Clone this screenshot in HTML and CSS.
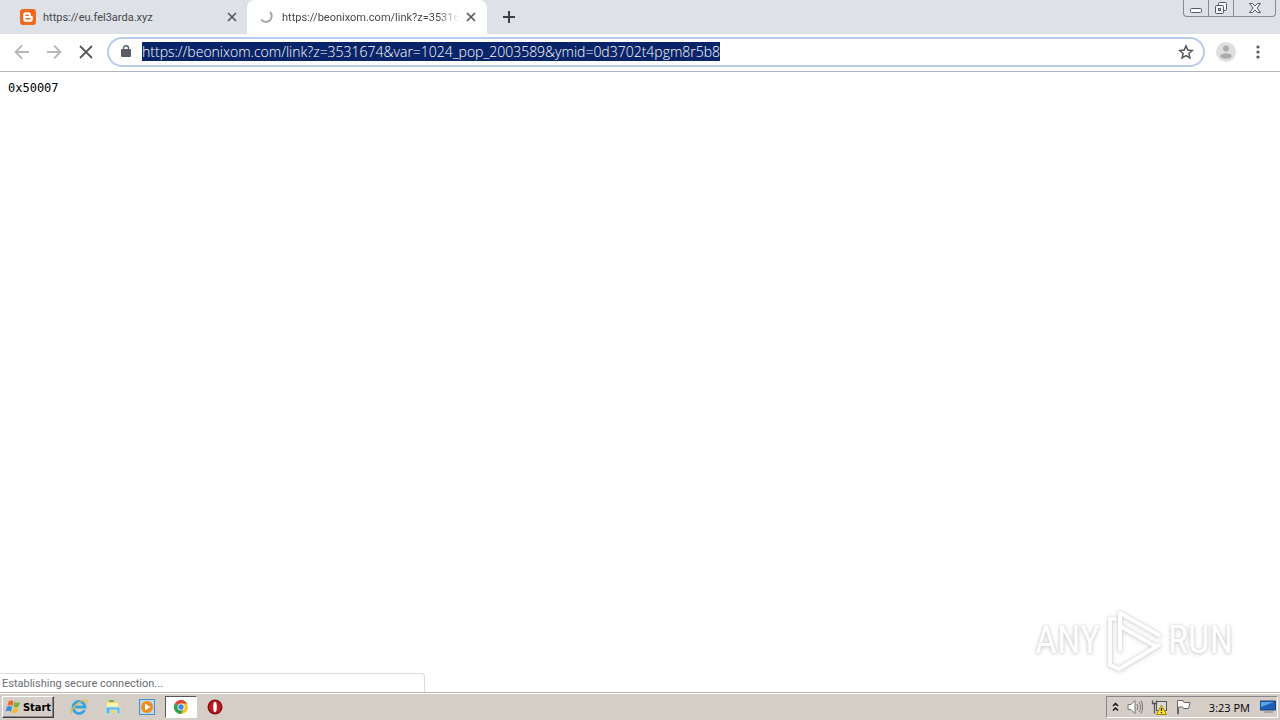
FILE: index.html
```html
<!DOCTYPE html>
<html lang="en">
<head>
<meta charset="utf-8">
<title>Browser desktop</title>
<link rel="stylesheet" href="styles.css">
</head>
<body>
<header class="tabstrip">
  <nav class="tabs">
    <div class="tab">
      <svg class="icon16" viewBox="0 0 16 16"><rect width="16" height="16" rx="3" fill="#f06a1d"/><path d="M6 3.200h2.300a2.600 2.600 0 0 1 2.600 2.600c0 1 .2 1.200 1 1.200.6 0 .9.300.9.900v2a2.800 2.800 0 0 1-2.800 2.800H6a2.800 2.800 0 0 1-2.800-2.800V6A2.800 2.800 0 0 1 6 3.200z" fill="#fff"/><path d="M6 6.200h2.200M6 9.800h4" stroke="#f06a1d" stroke-width="1.400" stroke-linecap="round"/></svg>
      <a class="tab-title" href="#">https://eu.fel3arda.xyz</a>
      <button class="tab-close" aria-label="Close tab"><svg viewBox="0 0 10 10"><path d="M1 1l8 8M9 1L1 9" stroke="#55585c" stroke-width="1.700"/></svg></button>
    </div>
    <div class="tab tab-active">
      <svg class="icon16" viewBox="0 0 16 16"><path d="M11 3a5.800 5.800 0 1 1-8.800 7.500" fill="none" stroke="#a2a4a7" stroke-width="1.900"/></svg>
      <a class="tab-title tab-fade" href="#">https://beonixom.com/link?z=35316</a>
      <button class="tab-close" aria-label="Close tab"><svg viewBox="0 0 10 10"><path d="M1 1l8 8M9 1L1 9" stroke="#55585c" stroke-width="1.700"/></svg></button>
    </div>
    <button class="new-tab" aria-label="New tab"><svg viewBox="0 0 12 12"><path d="M6 0v12M0 6h12" stroke="#3c4043" stroke-width="2"/></svg></button>
  </nav>
  <div class="window-controls">
    <button aria-label="Minimize"><svg width="14" height="16" viewBox="0 0 14 16"><rect x="1.500" y="8.500" width="11" height="4" rx="1" fill="#fff" stroke="#535666"/></svg></button>
    <button aria-label="Restore"><svg width="14" height="16" viewBox="0 0 14 16"><g fill="#f4f5f7" stroke="#535666"><rect x="4.500" y="2.500" width="8" height="8" rx="1"/><rect x="1.500" y="5.500" width="8" height="8" rx="1"/><rect x="4.500" y="8.500" width="2" height="2"/></g></svg></button>
    <button class="wide" aria-label="Close window"><svg width="14" height="16" viewBox="0 0 14 16"><path d="M1.500 3.500h3L7 6l2.500-2.500h3L9 8l3.500 4.500h-3L7 10l-2.500 2.500h-3L5 8z" fill="#fff" stroke="#535666" stroke-linejoin="round"/></svg></button>
  </div>
</header>
<div class="toolbar">
  <button class="tool" aria-label="Back"><svg viewBox="0 0 16 16"><path d="M15 8H2M8 1.500L1.500 8 8 14.500" fill="none" stroke="#b5b7ba" stroke-width="1.800"/></svg></button>
  <button class="tool" aria-label="Forward"><svg viewBox="0 0 16 16"><path d="M1 8h13M8 1.500L14.500 8 8 14.500" fill="none" stroke="#b5b7ba" stroke-width="1.800"/></svg></button>
  <button class="tool" aria-label="Stop loading"><svg viewBox="0 0 16 16"><path d="M2 2l12 12M14 2L2 14" stroke="#55585c" stroke-width="1.800"/></svg></button>
  <form class="omnibox">
    <svg class="lock" viewBox="0 0 10 13"><rect y="4" width="10" height="8" rx="1" fill="#5a5d61"/><path d="M2.500 5V3.300a2.500 2.500 0 0 1 5 0V5" fill="none" stroke="#5a5d61" stroke-width="1.400"/></svg>
    <input class="url" id="url" type="text" aria-label="Address" spellcheck="false" value="https://beonixom.com/link?z=3531674&amp;var=1024_pop_2003589&amp;ymid=0d3702t4pgm8r5b8">
    <button class="star" type="button" aria-label="Bookmark"><svg viewBox="0 0 16 16"><path d="M8 1.900l1.800 4.200 4.500.4-3.400 3 1 4.400L8 11.600l-3.900 2.300 1-4.400-3.400-3 4.500-.4z" fill="none" stroke="#55585c" stroke-width="1.500"/></svg></button>
  </form>
  <button class="avatar" aria-label="Profile"><svg viewBox="0 0 20 20"><circle cx="10" cy="10" r="10" fill="#dfdfdf"/><circle cx="10" cy="6.500" r="3" fill="#aaacae"/><ellipse cx="10" cy="14" rx="5.800" ry="2.800" fill="#aaacae"/></svg></button>
  <button class="menu" aria-label="Menu"><svg viewBox="0 0 4 14"><g fill="#55585c"><circle cx="2" cy="2" r="1.600"/><circle cx="2" cy="7" r="1.600"/><circle cx="2" cy="12" r="1.600"/></g></svg></button>
</div>
<main class="page">
  <p class="code">0x50007</p>
  <div class="bottom">
    <div class="status">Establishing secure connection...</div>
    <div class="watermark">
      <span class="wm-text">ANY</span>
      <svg class="wm-logo" viewBox="0 0 62 66"><path d="M17 43V6l39 22M7 12v46l9 4 40-24M17 19l35 20M12 12h-5" fill="none" stroke="#fff" stroke-width="4" stroke-linejoin="round" stroke-linecap="round"/></svg>
      <span class="wm-text">RUN</span>
    </div>
  </div>
</main>
<footer class="taskbar">
  <button class="start"><svg viewBox="0 0 18 16"><path d="M4 2q3-2 5 0L8 7Q5 5 2.500 7z" fill="#e9662c"/><path d="M10 2.500q3 2 6 0L14.500 7.500q-3 2-5.500 0z" fill="#7cb342"/><path d="M2 8q3-2 5.500 0L6.500 13Q3.500 11 .5 13z" fill="#3d8edb"/><path d="M8.800 8.500q2.500 2 5.500 0L13 13.500q-3 2-5.500 0z" fill="#f5bd2b"/></svg>Start</button>
  <button class="task" aria-label="Internet Explorer"><svg viewBox="0 0 18 18"><path d="M14.500 12A6 6 0 1 1 15 9H5" fill="none" stroke="#37a3df" stroke-width="2.800"/><path d="M1.500 15.500C-.5 11 12 .5 16.500 2.500q1 1-.5 3" fill="none" stroke="#e6bd45" stroke-width="1.300"/></svg></button>
  <button class="task" aria-label="Explorer"><svg viewBox="0 0 18 18"><path d="M2 3h5l1 1h7v11H2z" fill="#f1d477"/><path d="M3 5h11v4H3z" fill="#fff3b4"/><path d="M5 2h5v2H5z" fill="#75b654"/><path d="M2 9h14v7h-3v-4H6v4H2z" fill="#65b9df" stroke="#b9e4f3"/></svg></button>
  <button class="task" aria-label="Media Player"><svg viewBox="0 0 18 18"><rect x="1.500" y="1.500" width="15" height="15" fill="#b9daf1" stroke="#4d8fc5"/><circle cx="9" cy="9" r="6" fill="#f18b1c"/><path d="M7 5.500v7L12.500 9z" fill="#fff"/></svg></button>
  <button class="task task-active" aria-label="Chrome"><svg viewBox="0 0 18 18"><circle cx="9" cy="9" r="7" fill="#f5c42b"/><path d="M9 9L2.900 5.500A7 7 0 0 1 15.100 5.500H9z" fill="#dc4437"/><path d="M9 9L2.900 5.500A7 7 0 0 0 9 16l3-5.500z" fill="#34a053"/><circle cx="9" cy="9" r="3.500" fill="#fff"/><circle cx="9" cy="9" r="2.700" fill="#4285e8"/></svg></button>
  <button class="task" aria-label="Opera"><svg viewBox="0 0 18 18"><circle cx="9" cy="9" r="7.500" fill="#8f0c12"/><circle cx="9" cy="9" r="6" fill="#b81c22"/><ellipse cx="9" cy="9" rx="1.800" ry="5.200" fill="#fff"/></svg></button>
  <div class="tray">
    <svg class="chevrons" viewBox="0 0 7 10"><path d="M1 4l2.500-2.500L6 4M1 8.500L3.500 6 6 8.500" fill="none" stroke="#111" stroke-width="1.500"/></svg>
    <svg class="icon16" viewBox="0 0 16 16"><path d="M1 5.500h3l4-4v13l-4-4H1z" fill="#fff" stroke="#777"/><path d="M10 5q2 3 0 6M12 3q3.500 5 0 10M14 1.500q3.500 6.500 0 13" fill="none" stroke="#777"/></svg>
    <svg class="icon16" viewBox="0 0 16 16"><rect x="5.500" y="2.500" width="10" height="9" fill="#d9d9d9" stroke="#555"/><path d="M1.500 1.500v3h4v-3M3.500 4.500v10" fill="none" stroke="#555" stroke-width="1.300"/><path d="M10.500 6l5 9.500h-10z" fill="#ffe22b" stroke="#a88b00"/><path d="M10.500 9v3m0 1v1.300" stroke="#222" stroke-width="1.300"/></svg>
    <svg class="icon16" viewBox="0 0 16 16"><path d="M2.500 15V1.500H8l1 2h6l-1.500 6H8.500l-1-1.500h-4V15z" fill="#fff" stroke="#666"/></svg>
    <time class="clock">3:23 PM</time>
    <svg class="icon16" viewBox="0 0 16 16"><path d="M0 2h15.500v9H0z" fill="#1d5fb6" stroke="#174378"/><path d="M1 3h13L1 8z" fill="#5ba3e6"/><path d="M4 13h9" stroke="#aaa" stroke-width="2"/></svg>
  </div>
</footer>
<script src="page.js"></script>
</body>
</html>
```
FILE: styles.css
```css
* { box-sizing: border-box; }
body {
  margin: 0;
  min-height: 100vh;
  display: flex;
  flex-direction: column;
  background: #fff;
  font-family: "Open Sans", "Noto Sans", sans-serif;
  font-size: 11px;
  color: #333;
}
button { border: 0; padding: 0; background: none; font: inherit; color: inherit; display: flex; align-items: center; justify-content: center; }
svg { display: block; flex: none; }
.icon16 { width: 16px; height: 16px; }
.tabstrip { display: flex; justify-content: space-between; align-items: flex-start; height: 34px; background: #dee1e6; padding-right: 4px; }
.tabs { display: flex; align-items: stretch; height: 34px; padding-left: 7px; }
.tab { display: flex; align-items: center; width: 240px; padding: 0 10px 0 13px; gap: 7px; }
.tab-active { padding-left: 12px; padding-right: 11px; background: #fff; border-radius: 8px 8px 0 0; }
.tab-title { flex: 1; min-width: 0; white-space: nowrap; font-family: Roboto, sans-serif; color: #45484c; text-decoration: none; }
.tab-fade { mask-image: linear-gradient(to right, #000 88%, transparent); }
.tab-close { width: 10px; height: 10px; }
.tab-close svg { width: 10px; height: 10px; }
.new-tab { width: 28px; margin-left: 8px; }
.new-tab svg { width: 12px; height: 12px; }
.window-controls { display: flex; border: 1px solid #868a98; border-top: 0; border-radius: 0 0 4px 4px; }
.window-controls button { width: 25px; height: 16px; border-right: 1px solid #868a98; }
.window-controls .wide { width: 41px; border-right: 0; }
.toolbar { display: flex; align-items: center; height: 38px; padding: 0 14px 2px; border-bottom: 1px solid #b4b6b9; }
.tool { width: 16px; height: 16px; margin-right: 16px; }
.tool svg { width: 16px; height: 16px; }
.omnibox { flex: 1; display: flex; align-items: center; height: 30px; margin-left: -3px; padding: 0 9px 0 12px; border: 2px solid #b7cbed; border-radius: 15px; }
.lock { width: 10px; height: 13px; }
.url { flex: 1; min-width: 0; height: 22px; margin-left: 11px; padding: 0; border: 0; outline: 0; background: none; font-family: "Open Sans", "Noto Sans", sans-serif; font-size: 14px; font-weight: 300; color: #222; }
.url::selection { background: #0a246a; color: #fff; }
.star, .star svg { width: 16px; height: 16px; }
.avatar { margin-left: 11px; }
.avatar svg { width: 20px; height: 20px; }
.menu { width: 16px; margin-left: 14px; }
.menu svg { width: 4px; height: 14px; }
.page { flex: 1; display: flex; flex-direction: column; justify-content: space-between; }
.code { margin: 8px; font-family: "DejaVu Sans Mono", monospace; font-size: 12px; line-height: 16px; color: #000; }
.bottom { display: flex; justify-content: space-between; align-items: flex-end; }
.status { width: 425px; height: 19px; padding-left: 2px; border: 1px solid #dcdcdc; border-left: 0; border-bottom: 0; border-top-right-radius: 4px; font-family: Roboto, sans-serif; line-height: 19px; color: #6c6e71; }
.watermark { display: flex; align-items: center; gap: 3px; margin: 0 47px 19px 0; }
.wm-text { font-family: "Roboto Condensed", Roboto, sans-serif; font-size: 38px; line-height: 66px; color: #fff; text-shadow: 0 0 2px #ccc, 0 1px 4px #ccc; }
.wm-logo { width: 62px; height: 66px; filter: drop-shadow(0 0 1px #ccc) drop-shadow(0 1px 2px #ddd); }
.taskbar { display: flex; align-items: center; height: 28px; padding: 1px 2px 0; background: #d5cec7; border-top: 1px solid #b9b5af; box-shadow: inset 0 1px #fff; color: #000; }
.start { width: 52px; height: 22px; gap: 1px; border: 1px solid; border-color: #fff #404040 #404040 #fff; box-shadow: inset -1px -1px #888; font-family: "DejaVu Sans Condensed", "DejaVu Sans", sans-serif; font-weight: bold; font-size: 11px; }
.start svg { width: 17px; height: 16px; }
.task { width: 34px; height: 22px; }
.start + .task { margin-left: 8px; }
.task svg { width: 18px; height: 18px; }
.task-active { width: 32px; margin: 0 1px; background: #fff; border: 1px solid; border-color: #555 #fff #fff #555; }
.tray { display: flex; align-items: center; height: 22px; margin-left: auto; padding: 0 1px 0 5px; gap: 8px; border: 1px solid; border-color: #888 #fff #fff #888; }
.chevrons { width: 7px; height: 10px; }
.clock { margin: 0 2px 0 10px; }
```
FILE: page.js
```js
const url = document.getElementById("url");
url.focus();
url.select();
url.scrollLeft = 0;
```
